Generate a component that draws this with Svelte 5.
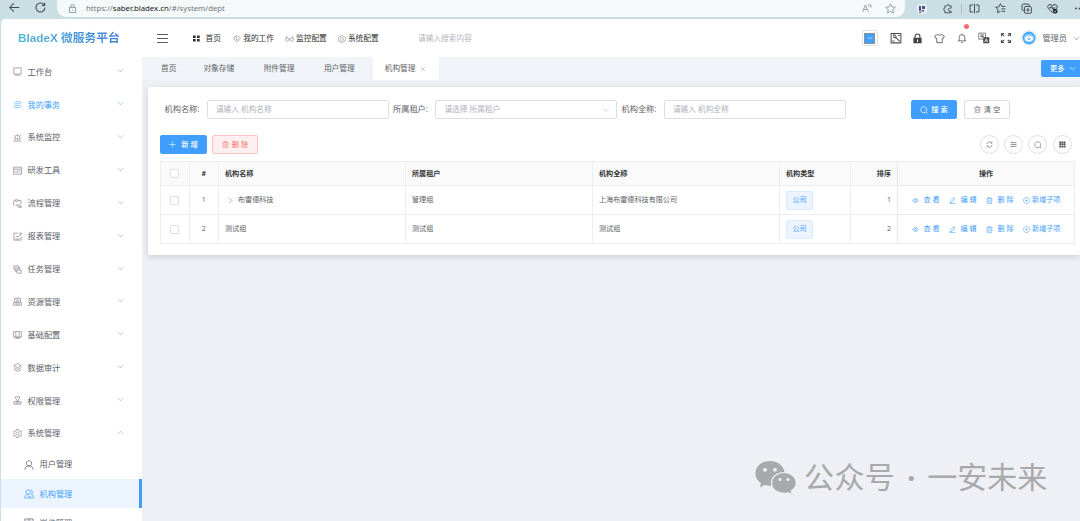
<script>
  const icons = {
    back: 'M15 8H1M7 2L1 8l6 6',
    reload: 'M13.5 4.5A6.5 6.5 0 1 0 14.5 8M14 1v4h-4',
    lock: 'M2.500 6h11v9h-11zM5 6V4a3 3 0 0 1 6 0v2M8 9.500v2',
    read: 'M1 14L5.5 3 10 14M2.5 10.5h6M10 2q2 2 1 4M12.5 1q3 3 1.5 6.5',
    star: 'M8 1l2.1 4.7 5 .5-3.8 3.4 1.1 5L8 12l-4.4 2.6 1.1-5L1 6.2l5-.5z',
    puzzle: 'M13 5.5V3H10a2 2 0 1 0-4 0H3v3.5a2 2 0 1 0 0 4V14h10v-2.5h-2a2 2 0 0 1 0-5h2z',
    split: 'M6 3H1.5v10H6M10 3h4.5v10H10M8 1v14',
    fav: 'M8 12l-4.5 2 1-4.5L1 6.2l4.6-.5L8 1l2 4h5M9.5 8.5H15M9.5 12H15',
    collect: 'M12 5V3.500a2 2 0 0 0-2-2H3.500a2 2 0 0 0-2 2V9a2 2 0 0 0 2 2H5M7 5h6a2 2 0 0 1 2 2v6a2 2 0 0 1-2 2H7a2 2 0 0 1-2-2V7a2 2 0 0 1 2-2zM10 7.500v5M7.500 10h5',
    heart: 'M8 14L2 8C-1 4 4 0 8 4c4-4 9 0 6 4zM3 7h3l1-2 2 5 1-3h2',
    desk: 'M1.5 1.5h13v11h-13zM3 14.5h10',
    flow: 'M1 5h3M4 2.5h6a3 3 0 0 1 3 3M11 4l2 2 2-2M4 6.5h7M1 9.5h12M15 11l-2-1.5M5 13.5h7a2 2 0 0 0 2-2M3 11.5v2h2',
    alarm: 'M4 13V8a4 4 0 0 1 8 0v5M1 14.5h14M8 1v2M2 3.5l1.5 1.5M14 3.5l-1.5 1.5M8 8v5M6 10.5h4M1 8.5h1.5M13.5 8.5H15',
    code: 'M1 2h14v12.5H1zM1 5.5h14M5.5 8l-2 2 2 2M10.5 8l2 2-2 2M9 7.5l-2 5',
    process: 'M4 11H3a2.5 2.5 0 0 1-2-2.5V4.5a2 2 0 0 1 2-2h2M4 1h3v3.5H4M10 2.5h2.5a2 2 0 0 1 2 2V8l-3 2.5H6l2 2.5M10 1v3.5M12 12.5h2.5v2.5H12zM8 14h4',
    report: 'M9 2H1.5v12.5h13V8M4 10l3-3 2 2 5-6M11 2h4v3M4 12.5h8',
    task: 'M1.5 1.5h8v5.5h-8zM3.5 7v4H7M6 9h8.5v5.5H7V10M9.5 4h2.5v5M4 4.5h3',
    resource: 'M3 10V2h10v8M1 10l-.5 4.5h15L15 10zM8 4a2 2 0 1 0 .01 0M5 9l1.5-1.5M11 9L9.5 7.5M4 12.5h8',
    base: 'M5 3H1v9.5h14V3h-4M5 3q3-1 6 0v9.5l-3 1.5-3-1.5zM3 14.5h10',
    layers: 'M8 1l6.5 3.5L8 8 1.5 4.5zM1.5 8L8 11.5 14.5 8M1.5 11.5L8 15l6.5-3.5',
    perm: 'M4 1.5h8L11 5 9 7v3H7V7L5 5zM1.5 10h13v4.5h-13zM4 12.5h8',
    gear: 'M6.3 1h3.4l.6 2 1.7 1 2-.5 1.5 2.8L14 8l1.5 1.7-1.5 2.8-2-.5-1.7 1-.6 2H6.3l-.6-2-1.7-1-2 .5L.5 9.7 2 8 .5 6.3 2 3.5l2 .5 1.7-1zM8 5.2a2.8 2.8 0 1 0 .01 0z',
    user: 'M8 1a4.2 4.2 0 1 0 .01 0zM1.5 15.5c0-4 2.5-6 6.5-6s6.5 2 6.5 6',
    org: 'M6.5 1.5a3.5 3.5 0 1 0 .01 0M1 14c0-3 2-5.5 5-5.5M1 14.3h14M10 1.5c4 0 4.5 5.5 1.5 7 2 .5 3.5 2 3.5 5.5M8 9v3h3',
    post: 'M1.5 1.5h13V15h-13zM8 1.5V15M4 5h2M10 5h2M4 8h8',
    tag: 'M1 7l4-5h6l4 5-7 7zM5 7l3 3 3.5-4M5 2l3 5',
    glasses: 'M4 7a3 3 0 1 0 .01 0M12 7a3 3 0 1 0 .01 0M7 9q1-1 2 0M1.5 8L4 3M14.5 8L12 3',
    tool: 'M1.5 2h13v12.5h-13zM4 4q3-1 4 1.5v2l5 5M5 4.5v2.5l3 1M11 4.5h2M3 12h3',
    shirt: 'M5.5 2L1 4.5 2.5 8 4 7.5V14h8V7.5l1.5.5L15 4.5 10.5 2q-2.5 3-5 0z',
    bell: 'M1.5 12.5h13M3.5 12.5V7a4.5 4.5 0 0 1 9 0v5.5M8 1v1.5M6.5 15h3',
    full: 'M5.5 5.5L2 2M2 5.5V2h3.5M10.5 5.5L14 2M10.5 2H14v3.5M5.5 10.5L2 14M2 10.5V14h3.5M10.5 10.5L14 14M14 10.5V14h-3.5',
    down: 'M2 5l6 6 6-6',
    up: 'M2 11l6-6 6 6',
    right: 'M5 2l6 6-6 6',
    close: 'M3 3l10 10M13 3L3 13',
    search: 'M7.5 1.5a6 6 0 1 0 .01 0M12 12l3 3',
    trash: 'M1 4h14M5.5 4V1.5h5V4M2.8 4v10.5h10.4V4M6.3 7v5M9.7 7v5',
    plus: 'M8 1v14M1 8h14',
    refresh: 'M2 7a6 6 0 0 1 11-2.5M13.5 1.5v3.5h-3.5M14 9a6 6 0 0 1-11 2.5M2.5 14.5V11H6',
    sliders: 'M1 3.5h14M1 8h14M1 12.5h14M5 1.5v4M11 6v4M6 10.500v4',
    eye: 'M.8 8Q8-1 15.2 8 8 17 .8 8zM8 5.5a2.5 2.5 0 1 0 .01 0',
    edit: 'M10 1.5L13.5 4 7 12l-4 1.5.5-4zM1 15h14',
    add: 'M8 1a7 7 0 1 0 .01 0M8 5v6M5 8h6'
  };
  const menu = [
    ['desk', '工作台'], ['flow', '我的事务'], ['alarm', '系统监控'], ['code', '研发工具'],
    ['process', '流程管理'], ['report', '报表管理'], ['task', '任务管理'], ['resource', '资源管理'],
    ['base', '基础配置'], ['layers', '数据审计'], ['perm', '权限管理'], ['gear', '系统管理']
  ];
  const subs = [['user', '用户管理'], ['org', '机构管理'], ['post', '岗位管理']];
  const tabs = ['首页', '对象存储', '附件管理', '用户管理'];
  const rows = [
    { n: 1, name: '布雷德科技', tenant: '管理组', full: '上海布雷德科技有限公司', open: true },
    { n: 2, name: '测试组', tenant: '测试组', full: '测试组', open: false }
  ];
</script>

{#snippet icon(name, size = 9, width = 1.2)}
  <svg width={size} height={size} viewBox="0 0 16 16" fill="none" stroke="currentColor" stroke-width={width} stroke-linejoin="round"><path d={icons[name]} /></svg>
{/snippet}

<div class="screen">
  <div class="browser">
    <div class="nav"><span>{@render icon('back', 11, 1.5)}</span><span>{@render icon('reload', 11, 1.5)}</span></div>
    <div class="address">
      {@render icon('lock', 9, 1.2)}
      <span class="url">https://<b>saber.bladex.cn</b>/#/system/dept</span>
      <span class="addr-tools">{@render icon('read', 10, 1.2)}{@render icon('star', 11, 1.1)}</span>
    </div>
    <div class="ext">
      <span class="slot">
        <svg width="10" height="10" viewBox="0 0 10 10"><rect width="10" height="10" rx="2" fill="#e6ebf5" /><path d="M2 2h2v5H2zM5 2h3v3H5zM5 6h2v1.5H4V9H2V8h3z" fill="#4b527d" /></svg>
      </span>
      <span class="slot">{@render icon('puzzle', 10, 1.4)}</span>
      <i></i>
      <span class="slot">{@render icon('split', 11, 1.4)}</span>
      <span class="slot">{@render icon('fav', 11, 1.4)}</span>
      <span class="slot">{@render icon('collect', 11, 1.4)}</span>
      <span class="slot">
        <svg width="11" height="11" viewBox="0 0 16 16" fill="none" stroke="#333c40" stroke-width="1.4"><path d={icons.heart} /><circle cx="12" cy="12" r="3.5" fill="#252d30" stroke="none" /><path d="M10.5 12l1.2 1.2 2-2" stroke="#fff" stroke-width="1" /></svg>
      </span>
      <svg class="dots" width="9" height="3" viewBox="0 0 9 3" fill="#3d484c"><circle cx="1" cy="1.5" r=".9" /><circle cx="4.500" cy="1.5" r=".9" /><circle cx="8" cy="1.5" r=".9" /></svg>
    </div>
  </div>

  <div class="page">
    <aside>
      <div class="logo"><span>BladeX 微服务平台</span></div>
      {#each menu as [ic, label], i}
        <div class="item" class:blue={i === 1}>
          {@render icon(ic, 9, 1.1)}<span class="label">{label}</span>
          <span class="arrow">{@render icon(i === 11 ? 'up' : 'down', 7, 1.2)}</span>
        </div>
      {/each}
      {#each subs as [ic, label], i}
        <div class="sub" class:active={i === 1}>{@render icon(ic, 10, 1.2)}<span>{label}</span></div>
      {/each}
    </aside>

    <main>
      <header>
        <div class="burger"><i></i><i></i><i></i></div>
        <nav class="top">
          <span class="home"><svg width="7" height="7" viewBox="0 0 7 7" fill="#303133"><path d="M0 .5h2.7v2.5H0zM4 .5h2.7v2.5H4zM0 4h2.7v2.5H0zM4 4h2.7v2.5H4z" /></svg>首页</span>
          <span>{@render icon('tag', 8, 1)}我的工作</span>
          <span>{@render icon('glasses', 9, 1)}监控配置</span>
          <span>{@render icon('gear', 8, 1)}系统配置</span>
        </nav>
        <span class="find">请输入搜索内容</span>
        <div class="tools">
          <span class="color"><em>{@render icon('down', 6, 1.6)}</em></span>
          <span>{@render icon('tool', 12, 1.4)}</span>
          <span><svg width="11" height="11" viewBox="0 0 16 16"><path d="M2 7h12v8H2z" fill="#444" /><path d="M4.5 8V5a3.5 3.5 0 0 1 7 0v3" fill="none" stroke="#444" stroke-width="1.6" /><path d="M7.3 9.5h1.4V13H7.3z" fill="#fff" /></svg></span>
          <span>{@render icon('shirt', 11, 1.2)}</span>
          <span class="bell">{@render icon('bell', 10, 1.2)}<u></u></span>
          <span><svg width="12" height="12" viewBox="0 0 16 16"><path d="M1 1.5h9v8H1zM3 4h5M3 6h5M5.5 3v5" fill="none" stroke="#777" stroke-width="1.2" /><path d="M7 7h8v8H7z" fill="#444" /><path d="M9 13.5l2-4.5 2 4.5M9.8 12h2.4" fill="none" stroke="#fff" /></svg></span>
          <span>{@render icon('full', 12, 1.5)}</span>
          <span class="avatar"><svg width="16" height="16" viewBox="0 0 16 16"><circle cx="8" cy="8" r="7.5" fill="#fff" stroke="#e3e8ee" /><circle cx="8" cy="8" r="6.5" fill="#47a9f4" /><path d="M3 8q0-4 5-4t5 4-5 4.5S3 12 3 8z" fill="#8ed0ff" /><ellipse cx="8" cy="8.5" rx="4" ry="2.6" fill="#f5fbff" /><path d="M6.5 8.5q1.5 2 3 0" fill="none" stroke="#3286d5" /></svg></span>
        </div>
        <span class="admin">管理员</span>
        {@render icon('down', 7, 1.2)}
      </header>

      <div class="tabs">
        {#each tabs as t}<span class="tab">{t}</span>{/each}
        <span class="tab current">机构管理{@render icon('close', 6, 1.3)}</span>
        <button class="more">更多 {@render icon('down', 7, 1.5)}</button>
      </div>

      <section class="card">
        <div class="search">
          <div class="field"><label for="f1">机构名称:</label><div class="box" id="f1">请输入 机构名称</div></div>
          <div class="field"><label for="f2">所属租户:</label><div class="box" id="f2">请选择 所属租户{@render icon('down', 8, 1.1)}</div></div>
          <div class="field"><label for="f3">机构全称:</label><div class="box" id="f3">请输入 机构全称</div></div>
          <div class="btns">
            <button class="btn primary">{@render icon('search', 8, 1.4)}搜 索</button>
            <button class="btn">{@render icon('trash', 7, 1.2)}清 空</button>
          </div>
        </div>
        <div class="bar">
          <button class="btn primary add">{@render icon('plus', 7, 1.3)}新 增</button>
          <button class="btn danger">{@render icon('trash', 7, 1.3)}删 除</button>
          <div class="rounds">
            <span>{@render icon('refresh', 7, 1.3)}</span>
            <span>{@render icon('sliders', 7, 1.3)}</span>
            <span>{@render icon('search', 8, 1.2)}</span>
            <span><svg width="7" height="7" viewBox="0 0 7 7" fill="#505255"><path d="M.3.5h1.8v1.7H.3zM2.5.5h1.8v1.7H2.5zM4.7.5h1.8v1.7H4.7zM.3 2.6h1.8v1.7H.3zM2.5 2.6h1.8v1.7H2.5zM4.7 2.6h1.8v1.7H4.7zM.3 4.7h1.8v1.7H.3zM2.5 4.7h1.8v1.7H2.5zM4.7 4.7h1.8v1.7H4.7z" /></svg></span>
          </div>
        </div>
        <div class="table">
          <div class="tr head">
            <div class="c"><i class="check"></i></div><div class="c">#</div><div>机构名称</div><div>所属租户</div><div>机构全称</div><div>机构类型</div><div class="r">排序</div><div class="c fixed">操作</div>
          </div>
          {#each rows as r}
            <div class="tr">
              <div class="c"><i class="check"></i></div><div class="c">{r.n}</div>
              <div>{#if r.open}<span class="expand">{@render icon('right', 7, 1.3)}</span>{/if}{r.name}</div>
              <div>{r.tenant}</div><div>{r.full}</div><div><span class="type">公司</span></div><div class="r">{r.n}</div>
              <div class="ops fixed">
                <span>{@render icon('eye', 7, 1.3)}查 看</span><span>{@render icon('edit', 7, 1.3)}编 辑</span><span>{@render icon('trash', 7, 1.3)}删 除</span><span class="child">{@render icon('add', 7, 1.2)}新增子项</span>
              </div>
            </div>
          {/each}
        </div>
      </section>
    </main>
  </div>

  <div class="watermark">
    <svg width="42" height="35" viewBox="0 0 42 35">
      <path d="M15 1C6.5 1 .5 6.5.5 13.5c0 4 2 7.5 5.5 9.5l-1.2 4.5 5-2.6q2.5.8 5.2.8C23.5 25.7 29.5 20.5 29.5 13.5S23.5 1 15 1z" fill="#a8a9ab" />
      <path d="M29 12.5c-7 0-12.5 4.5-12.5 10.5S22 33.3 29 33.3q2 0 4-.6l4.3 2-1-3.7c3-2 5-4.8 5-8 0-6-5.3-10.5-12.3-10.5z" fill="#a8a9ab" stroke="#f0f1f5" stroke-width="1.2" />
      <g fill="#f0f1f5"><circle cx="10" cy="9.8" r="1.9" /><circle cx="20" cy="9.8" r="1.9" /><circle cx="25" cy="19.5" r="1.6" /><circle cx="33" cy="19.5" r="1.6" /></g>
    </svg>
    <span class="account">公众号</span><span class="dot">·</span><span>一安未来</span>
  </div>
</div>

<style>
  :global(body) { overflow: hidden; }
  .screen { position: relative; width: 1080px; height: 521px; overflow: hidden; background: #cadfe3; display: flex; flex-direction: column; font-family: "Open Sans", "Noto Sans CJK SC", sans-serif; font-size: 7.7px; color: #606266; line-height: 1; box-sizing: border-box; }
  .screen :global(*) { box-sizing: border-box; }
  svg { flex: none; display: block; }
  button { font: inherit; margin: 0; padding: 0; }

  .browser { height: 19px; flex: none; display: flex; color: #3d484c; }
  .nav { width: 57px; flex: none; display: flex; padding: 2px 0 0 9px; gap: 15px; }
  .address { width: 848px; flex: none; height: 17px; background: #f5f9fa; border-radius: 0 0 9px 9px; display: flex; align-items: center; padding-left: 11px; color: #6a7478; }
  .url { margin-left: 9px; font-family: "Noto Sans", sans-serif; font-size: 7.75px; color: #70787b; }
  .url b { font-weight: 400; color: #16191a; }
  .addr-tools { margin-left: auto; display: flex; gap: 13px; padding-right: 9px; color: #7b8689; }
  .ext { flex: none; display: flex; align-items: center; height: 17px; padding-left: 3.5px; }
  .slot { width: 26px; display: flex; justify-content: center; }
  .ext i { width: 1px; height: 10px; background: #a9bec3; margin: 0; }
  .dots { margin-left: 9px; }

  .page { flex: 1; min-height: 0; margin-left: 1px; display: flex; background: #fff; border-radius: 5px 0 0 0; overflow: hidden; }
  aside { width: 141px; flex: none; background: #fff; overflow: hidden; font-size: 8.2px; color: #5c6068; }
  .logo { height: 36.3px; display: flex; align-items: center; padding: 2px 0 0 17px; }
  .logo span { font-size: 11.75px; font-weight: 600; line-height: 18px; font-family: "Liberation Sans", "Noto Sans CJK SC", sans-serif; white-space: nowrap; background: linear-gradient(90deg, #55b7d4, #3f7edb); background-clip: text; -webkit-background-clip: text; color: transparent; }
  .item { height: 32.9px; display: flex; align-items: center; padding-left: 11.5px; }
  .item .label { margin-left: 6px; }
  .item > svg { opacity: .85; }
  .arrow { margin-left: auto; margin-right: 18px; color: #8d9096; padding-bottom: 2px; }
  .blue, .blue .arrow { color: #409eff; }
  .sub { height: 29.2px; display: flex; align-items: center; gap: 6px; padding-left: 22.5px; flex: none; }
  .sub.active { background: #ecf5ff; color: #409eff; border-right: 3px solid #409eff; }

  main { flex: 1; min-width: 0; background: #eff0f5; display: flex; flex-direction: column; }
  header { height: 38px; flex: none; display: flex; align-items: center; background: #fff; white-space: nowrap; }
  .burger { width: 11px; margin-left: 15px; display: flex; flex-direction: column; gap: 3px; }
  .burger i { height: 1px; background: #5c5e60; }
  .top { display: flex; margin-left: 24.5px; width: 225.5px; color: #303133; padding-top: 1px; }
  .top span { display: flex; align-items: center; gap: 2.3px; margin-right: 10.8px; }
  .top .home { gap: 6px; margin-right: 12px; }
  .top span:not(.home) svg { color: #777; }
  .find { color: #b3b6bd; padding-top: 1px; }
  .tools { margin-left: auto; display: flex; align-items: center; color: #505255; }
  .tools > span { width: 22px; display: flex; justify-content: center; }
  .tools .color { width: 16px; height: 16px; border: 1px solid #e2e4e9; border-radius: 2px; align-items: center; margin-right: 7px; }
  .color em { width: 11px; height: 11px; background: #409eff; border: 1px solid #8b9299; color: #fff; display: flex; align-items: center; justify-content: center; }
  .bell { position: relative; }
  .bell u { position: absolute; width: 5px; height: 5px; border-radius: 50%; background: #f56c6c; left: 13px; top: -9px; }
  .tools .avatar { width: 24px; }
  .admin { font-size: 8.2px; margin: 0 6px 0 1.5px; }

  .tabs { height: 23px; flex: none; background: #f0f4f8; display: flex; align-items: center; }
  .tab { margin-left: 19px; margin-right: 8px; }
  .tab + .tab { margin-right: 10.5px; }
  .tab.current { background: #fff; height: 23px; width: 66px; margin: 0 0 0 7.5px; padding-left: 12px; display: flex; align-items: center; gap: 5px; color: #606266; }
  .current svg { color: #999; }
  .more { margin-left: auto; width: 39px; height: 17px; border: 0; border-radius: 2px 0 0 2px; background: #409eff; color: #fff; display: flex; align-items: center; gap: 5px; padding-left: 9px; font-size: 7.2px; font-weight: 500; }

  .card { background: #fff; margin: 7px 0 0 6px; height: 168px; border-radius: 2px 0 0 2px; box-shadow: 0 2px 6px rgba(0, 0, 0, .14); padding: 13px 0 0 12px; }
  .search { display: flex; height: 19px; }
  .field { display: flex; align-items: center; width: 228.5px; }
  .field label { width: 47px; padding-left: 4.5px; font-size: 8.2px; white-space: nowrap; }
  .box { width: 182px; height: 19px; border: 1px solid #dcdfe6; border-radius: 2px; padding: 0 6px 0 8px; display: flex; align-items: center; justify-content: space-between; color: #afb2b9; }
  .btns { display: flex; gap: 7px; margin-left: 65.5px; }
  .btn { height: 19px; width: 46px; border: 1px solid #dcdfe6; border-radius: 2px; background: #fff; color: #606266; display: flex; align-items: center; justify-content: center; gap: 3px; font-size: 7.3px; white-space: nowrap; }
  .primary { background: #409eff; border-color: #409eff; color: #fff; font-weight: 500; }
  .danger { background: #fef0f0; border-color: #fbc4c4; color: #f56c6c; }
  .add { width: 47px; gap: 5px; }
  .bar { display: flex; gap: 5px; margin-top: 16px; height: 19px; }
  .rounds { margin-left: auto; display: flex; gap: 5.3px; padding-right: 8.5px; }
  .rounds span { width: 19px; height: 19px; border: 1px solid #dcdfe6; border-radius: 50%; display: flex; align-items: center; justify-content: center; }

  .table { margin-top: 7px; width: 915px; border: 1px solid #ebeef5; border-bottom: 0; font-size: 7.1px; }
  .tr { height: 29px; display: grid; grid-template-columns: 28.5px 29.5px 187px 187px 187px 71px 47px 1fr; border-bottom: 1px solid #ebeef5; }
  .tr > div { display: flex; align-items: center; padding: 0 6px; border-right: 1px solid #ebeef5; white-space: nowrap; }
  .tr > div:last-child { border-right: 0; }
  .tr .c { justify-content: center; }
  .tr .r { justify-content: flex-end; }
  .head { height: 24px; background: #fafafa; font-weight: 700; color: #333538; }
  .tr .fixed { box-shadow: -1px 0 2px rgba(0, 0, 0, .04); }
  .check { width: 9px; height: 9px; border: 1px solid #dcdfe6; border-radius: 1px; background: #fff; margin-right: 1px; }
  .expand { margin: 0 4px 0 2px; color: #777; }
  .type { width: 27px; height: 19px; background: #ecf5ff; border: 1px solid #d9ecff; border-radius: 2px; color: #409eff; display: flex; align-items: center; justify-content: center; }
  .tr .ops { padding-left: 13.5px; color: #409eff; gap: 9px; }
  .ops span { display: flex; align-items: center; gap: 5px; }
  .ops .child { gap: 2.5px; }

  .watermark { position: absolute; left: 755px; top: 460px; display: flex; color: #a8a9ab; font-family: "Noto Sans CJK SC", sans-serif; font-size: 30px; line-height: 31px; white-space: nowrap; }
  .watermark .account { margin-left: 7px; letter-spacing: .4px; }
  .watermark .dot { width: 32px; display: flex; justify-content: center; font-family: "Noto Sans", sans-serif; font-weight: 700; line-height: 36px; }
</style>
